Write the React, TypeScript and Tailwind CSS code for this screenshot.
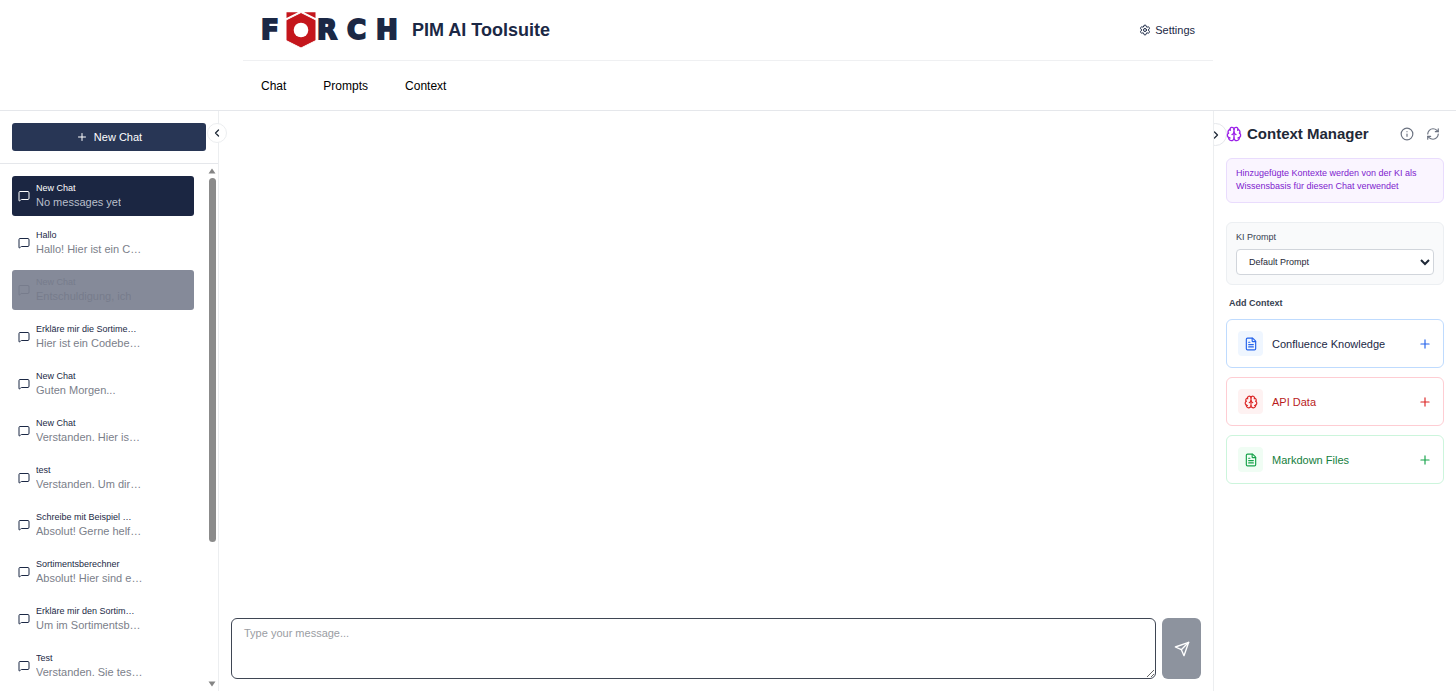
import React, { useState } from "react";
import {
  Brain,
  ChevronLeft,
  ChevronRight,
  FileText,
  Info,
  MessageSquare,
  Plus,
  RefreshCw,
  Settings,
} from "lucide-react";

type Chat = { title: string; preview: string; state?: "active" | "pending" };

const chats: Chat[] = [
  { title: "New Chat", preview: "No messages yet", state: "active" },
  { title: "Hallo", preview: "Hallo! Hier ist ein C…" },
  { title: "New Chat", preview: "Entschuldigung, ich", state: "pending" },
  { title: "Erkläre mir die Sortime…", preview: "Hier ist ein Codebe…" },
  { title: "New Chat", preview: "Guten Morgen..." },
  { title: "New Chat", preview: "Verstanden. Hier is…" },
  { title: "test", preview: "Verstanden. Um dir…" },
  { title: "Schreibe mit Beispiel …", preview: "Absolut! Gerne helf…" },
  { title: "Sortimentsberechner", preview: "Absolut! Hier sind e…" },
  { title: "Erkläre mir den Sortim…", preview: "Um im Sortimentsb…" },
  { title: "Test", preview: "Verstanden. Sie tes…" },
];

function Logo() {
  return (
    <svg viewBox="0 0 136 36" className="h-9 w-[136px]" role="img" aria-label="FÖRCH">
      <g
        fill="#1b2845"
        stroke="#1b2845"
        strokeWidth="2"
        fontFamily="DejaVu Sans, sans-serif"
        fontWeight="700"
        fontSize="26"
      >
        <text x="0" y="27">F</text>
        <text x="56" y="27">R</text>
        <text x="86" y="27">C</text>
        <text x="115" y="27">H</text>
      </g>
      <path
        d="M40 0.5 L55 8 V28.5 L40 36 L25 28.5 V8 Z"
        fill="#c4161c"
        stroke="#ffffff"
        strokeWidth="1"
      />
      <path d="M25.5 0.2 H37 L25.5 6 Z M54.5 0.2 H43 L54.5 6 Z" fill="#c4161c" />
      <circle cx="40" cy="18" r="7.3" fill="#ffffff" />
    </svg>
  );
}

function Header() {
  return (
    <header className="shrink-0 border-b border-[#e5e7eb]">
      <div className="mx-auto max-w-[970px]">
        <div className="flex h-[61px] items-center justify-between border-b border-[#eff0f2] px-[18px]">
          <div className="flex items-center gap-[15px]">
            <Logo />
            <h1 className="text-[18px] leading-6 font-bold text-[#1b2845]">PIM AI Toolsuite</h1>
          </div>
          <button type="button" className="flex items-center gap-1 text-[11px] leading-4 text-[#1b2845]">
            <Settings size={12} strokeWidth={2} />
            Settings
          </button>
        </div>
        <nav className="flex h-[49px] items-center gap-[37px] px-[18px] text-[12px] leading-4 text-black">
          <a href="#chat">Chat</a>
          <a href="#prompts">Prompts</a>
          <a href="#context">Context</a>
        </nav>
      </div>
    </header>
  );
}

const rowStyle = {
  active: "bg-[#1b2642] text-white",
  pending: "bg-[#858a99] text-[#777c8c]",
  idle: "bg-white text-[#1b2845]",
};
const previewStyle = {
  active: "text-[#b9bfca]",
  pending: "text-[#777c8c]",
  idle: "text-[#7b808a]",
};

function Sidebar() {
  return (
    <aside className="relative flex w-[219px] shrink-0 flex-col border-r border-[#eceef0]">
      <div className="border-b border-[#e5e7eb] p-3">
        <button
          type="button"
          className="flex h-7 w-full items-center justify-center gap-1.5 rounded-[3px] bg-[#283655] text-[11px] leading-4 text-white"
        >
          <Plus size={12} />
          New Chat
        </button>
      </div>
      <button
        type="button"
        aria-label="Collapse chat list"
        className="absolute top-3 -right-[9px] z-10 flex size-5 items-center justify-center rounded-full border border-[#eceef0] bg-white text-[#1f2937]"
      >
        <ChevronLeft size={12} strokeWidth={2.5} />
      </button>
      <div className="flex min-h-0 flex-1">
        <ul className="flex flex-1 flex-col gap-[7px] overflow-hidden p-3">
          {chats.map((chat, i) => {
            const state = chat.state ?? "idle";
            return (
              <li key={i} className="shrink-0">
                <button
                  type="button"
                  className={`flex w-full items-center gap-1.5 rounded-[3px] px-1.5 py-1.5 text-left ${rowStyle[state]}`}
                >
                  <MessageSquare size={12} className="shrink-0" />
                  <span className="min-w-0">
                    <span className="block truncate text-[9px] leading-[13px]">{chat.title}</span>
                    <span className={`block truncate text-[11px] leading-[15px] ${previewStyle[state]}`}>
                      {chat.preview}
                    </span>
                  </span>
                </button>
              </li>
            );
          })}
        </ul>
        <div className="flex w-3 shrink-0 flex-col items-center py-1" aria-hidden="true">
          <svg viewBox="0 0 8 6" className="h-1.5 w-2">
            <path d="M4 0.5 L7.5 5.5 H0.5 Z" fill="#858585" />
          </svg>
          <div className="my-1 flex min-h-0 w-[7px] flex-1 flex-col">
            <div className="h-[73%] rounded-full bg-[#8b8b8b]" />
          </div>
          <svg viewBox="0 0 8 6" className="h-1.5 w-2">
            <path d="M4 5.5 L7.5 0.5 H0.5 Z" fill="#858585" />
          </svg>
        </div>
      </div>
    </aside>
  );
}

function Conversation() {
  const [message, setMessage] = useState("");
  return (
    <main className="flex min-w-0 flex-1 flex-col justify-end p-3">
      <form className="flex gap-1.5" onSubmit={(e) => e.preventDefault()}>
        <textarea
          aria-label="Message"
          placeholder="Type your message..."
          value={message}
          onChange={(e) => setMessage(e.target.value)}
          className="h-[61px] min-w-0 flex-1 rounded-md border border-[#3f4654] bg-white px-3 py-1.5 text-[11px] leading-4 outline-none placeholder:text-[#9a9da3]"
        />
        <button
          type="submit"
          aria-label="Send message"
          className="flex w-[39px] items-center justify-center rounded-md bg-[#8d939e] text-white"
        >
          <svg
            viewBox="0 0 24 24"
            className="size-4"
            fill="none"
            stroke="currentColor"
            strokeWidth="2"
            strokeLinecap="round"
            strokeLinejoin="round"
          >
            <path d="M22 2 15 22 11 13 2 9Z" />
            <path d="M22 2 11 13" />
          </svg>
        </button>
      </form>
    </main>
  );
}

const sources = [
  {
    label: "Confluence Knowledge",
    Icon: FileText,
    card: "border-[#bfdbfe] text-[#1b2845]",
    tile: "bg-[#eff6ff] text-[#2563eb]",
    plus: "text-[#2563eb]",
  },
  {
    label: "API Data",
    Icon: Brain,
    card: "border-[#fecdd3] text-[#b91c1c]",
    tile: "bg-[#fef2f2] text-[#dc2626]",
    plus: "text-[#dc2626]",
  },
  {
    label: "Markdown Files",
    Icon: FileText,
    card: "border-[#ccf5dc] text-[#15803d]",
    tile: "bg-[#f0fdf4] text-[#16a34a]",
    plus: "text-[#16a34a]",
  },
];

function ContextManager() {
  return (
    <aside className="relative w-[243px] shrink-0 overflow-hidden border-l border-[#eceef0] px-3 py-[11px]">
      <button
        type="button"
        aria-label="Collapse context manager"
        className="absolute top-3 -left-[10px] flex size-[23px] items-center justify-center rounded-full border border-[#e5e7eb] bg-white text-[#1f2937]"
      >
        <ChevronRight size={12} strokeWidth={2.5} />
      </button>
      <div className="relative flex h-6 items-center">
        <Brain size={16} className="text-[#9b1fe8]" />
        <h2 className="ml-[5px] flex-1 text-[15px] leading-6 font-bold text-[#1f2937]">Context Manager</h2>
        <div className="flex gap-3 pr-1 text-[#6b7280]">
          <button type="button" aria-label="About contexts">
            <Info size={14} strokeWidth={2} />
          </button>
          <button type="button" aria-label="Refresh">
            <RefreshCw size={14} strokeWidth={2} />
          </button>
        </div>
      </div>
      <p className="mt-3 rounded-md border border-[#e9dcfd] bg-[#faf5ff] px-[9px] pt-2 pb-[9px] text-[9px] leading-[13px] text-[#7e22ce]">
        Hinzugefügte Kontexte werden von der KI als Wissensbasis für diesen Chat verwendet
      </p>
      <div className="mt-[19px] rounded-md border border-[#eceff2] bg-[#f9fafb] px-[9px] pt-2 pb-[9px]">
        <label htmlFor="prompt" className="block text-[9px] leading-3 text-[#374151]">
          KI Prompt
        </label>
        <select
          id="prompt"
          className="mt-[6px] block h-[26px] w-full rounded border border-[#d1d5db] bg-white px-2 text-[9px] text-[#1f2937]"
        >
          <option>Default Prompt</option>
        </select>
      </div>
      <h3 className="mt-3 ml-[3px] text-[9px] leading-[13px] font-bold text-[#374151]">Add Context</h3>
      <div className="mt-[9px] flex flex-col gap-[9px]">
        {sources.map(({ label, Icon, card, tile, plus }) => (
          <button
            key={label}
            type="button"
            className={`flex h-[49px] items-center rounded-md border bg-white pr-[11px] pl-[11px] text-[11px] leading-4 ${card}`}
          >
            <span className={`flex size-[25px] items-center justify-center rounded ${tile}`}>
              <Icon size={14} />
            </span>
            <span className="ml-[9px] flex-1 text-left">{label}</span>
            <Plus size={14} className={plus} />
          </button>
        ))}
      </div>
    </aside>
  );
}

export default function App() {
  return (
    <div className="flex h-screen flex-col bg-white font-['Liberation_Sans',Arial,sans-serif]">
      <Header />
      <div className="flex min-h-0 flex-1">
        <Sidebar />
        <Conversation />
        <ContextManager />
      </div>
    </div>
  );
}
